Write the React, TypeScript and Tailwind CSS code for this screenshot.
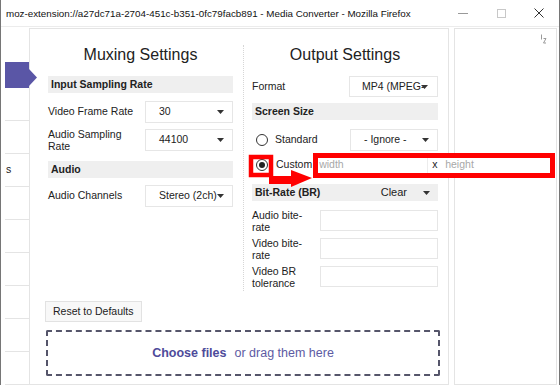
import React from 'react';

// small dropdown caret used by every select
const Caret = ({ className = '' }: { className?: string }) => (
  <svg width="7" height="4" viewBox="0 0 7 4" className={`shrink-0 ${className}`}>
    <polygon points="0,0 7,0 3.5,4" fill="#333" />
  </svg>
);

const Select = ({ value, className = '' }: { value: string; className?: string }) => (
  <div className={`flex items-center h-[22px] bg-white border border-[#e6e6e6] pl-[13px] pr-[8px] ${className}`}>
    <span className="flex-1 whitespace-nowrap">{value}</span>
    <Caret />
  </div>
);

const Section = ({ children, className = '' }: { children: React.ReactNode; className?: string }) => (
  <div className={`h-[17px] bg-[#efefef] pl-[3px] flex items-center font-bold ${className}`}>{children}</div>
);

const Radio = ({ checked }: { checked?: boolean }) => (
  <span className="w-[12px] h-[12px] rounded-full border border-[#333] bg-white flex items-center justify-center shrink-0">
    {checked && <span className="w-[6px] h-[6px] rounded-full bg-[#222]" />}
  </span>
);

const InputRow = ({ label, className = '' }: { label: string; className?: string }) => (
  <div className={`flex items-center h-[21px] ${className}`}>
    <span className="w-[64px] leading-[12px]">{label}</span>
    <div className="ml-auto w-[118px] h-[21px] bg-white border border-[#e6e6e6]" />
  </div>
);

const TitleBar = () => (
  <div className="flex items-center h-[27px] border-b border-[#ececec] bg-white">
    <span className="pl-[5px] pt-[2px] font-['Liberation_Sans',Arial,sans-serif] text-[9.8px] text-[#111] whitespace-nowrap">
      moz-extension://a27dc71a-2704-451c-b351-0fc79facb891 - Media Converter - Mozilla Firefox
    </span>
    <div className="ml-auto mr-[1px] flex h-full">
      <div className="w-[38px] flex items-center justify-center">
        <span className="w-[10px] h-px bg-[#999]" />
      </div>
      <div className="w-[38px] flex items-center justify-center">
        <span className="w-[9px] h-[9px] border border-[#c8c8c8]" />
      </div>
      <div className="w-[38px] flex items-center justify-center">
        <svg width="10" height="10" viewBox="0 0 10 10">
          <path d="M0.5 0.5 L9.5 9.5 M9.5 0.5 L0.5 9.5" stroke="#333" strokeWidth="1" />
        </svg>
      </div>
    </div>
  </div>
);

const Sidebar = () => (
  <div className="w-[28px] shrink-0 pl-[4px] pt-[34px] flex flex-col">
    <div className="relative h-[32px] bg-[#5a56a6]">
      <svg width="9" height="18" viewBox="0 0 9 18" className="absolute left-full top-[7px]">
        <polygon points="0,0 8,8.5 0,17" fill="#5a56a6" />
      </svg>
    </div>
    {['', '', 's', '', '', '', '', '', ''].map((t, i) => (
      <div key={i} className="h-[33px] border-b border-[#e4e4e4] flex items-center pl-[1px] shrink-0">
        {t}
      </div>
    ))}
  </div>
);

export default function App() {
  return (
    <div className="relative w-[560px] h-[385px] overflow-hidden bg-white border-x border-[#767676] font-['Liberation_Sans',Arial,sans-serif] text-[10.5px] text-[#222] flex flex-col">
      <TitleBar />
      <div className="flex flex-1 min-h-0 pt-[1px]">
        <Sidebar />

        {/* main converter panel */}
        <div className="w-[420px] shrink-0 border border-[#e4e4e4] bg-white pl-[15px] pr-[9px] pt-[16px]">
          <div className="flex ml-[3px]">
            <div className="w-[196px] pr-[10px] border-r border-dotted border-[#d6d6d6]">
              <h2 className="text-[16px] leading-[20px] text-center font-normal">Muxing Settings</h2>
              <Section className="mt-[11px]">Input Sampling Rate</Section>
              <div className="flex items-center mt-[8px]">
                <span className="w-[97px]">Video Frame Rate</span>
                <Select value="30" className="w-[88px]" />
              </div>
              <div className="flex items-center mt-[5px]">
                <span className="w-[97px] leading-[12px]">Audio Sampling Rate</span>
                <Select value="44100" className="w-[88px]" />
              </div>
              <Section className="mt-[9px]">Audio</Section>
              <div className="flex items-center mt-[7px]">
                <span className="w-[97px]">Audio Channels</span>
                <Select value="Stereo (2ch)" className="w-[88px]" />
              </div>
            </div>

            <div className="w-[194px] pl-[8px] pb-[4px]">
              <h2 className="text-[16px] leading-[20px] text-center font-normal">Output Settings</h2>
              <div className="flex items-center mt-[11px] h-[21px]">
                <span>Format</span>
                <div className="ml-auto w-[89px] h-[21px] flex items-center bg-white border border-[#e6e6e6] pl-[12px] pr-[7px]">
                  <span className="whitespace-nowrap">MP4 (MPEG-</span>
                  <Caret className="-ml-[3px]" />
                </div>
              </div>
              <Section className="mt-[6px]">Screen Size</Section>
              <div className="flex items-center mt-[9px]">
                <span className="ml-[4px]"><Radio /></span>
                <span className="ml-[7px]">Standard</span>
                <Select value="- Ignore -" className="ml-auto w-[88px]" />
              </div>
              <div className="flex items-center mt-[3px] h-[22px]">
                <span className="ml-[4px]"><Radio checked /></span>
                <span className="ml-[8px]">Custom</span>
                <div className="relative z-10 ml-[1px] shrink-0 w-[242px] h-[25px] border-[5px] border-[#f00] bg-white flex items-center">
                  <span className="w-[110px] h-full pl-[1px] flex items-center text-[#a8a8a8] border-r border-[#ececec]">width</span>
                  <span className="w-[14px] pl-[4px]">x</span>
                  <span className="pl-[3px] text-[#a8a8a8]">height</span>
                </div>
              </div>
              <Section className="mt-[8px] pr-[8px]">
                <span>Bit-Rate (BR)</span>
                <span className="ml-auto font-normal text-[11px] mr-[16px]">Clear</span>
                <Caret />
              </Section>
              <InputRow label="Audio bite-rate" className="mt-[9px]" />
              <InputRow label="Video bite-rate" className="mt-[7px]" />
              <InputRow label="Video BR tolerance" className="mt-[7px]" />
            </div>
          </div>

          <button className="mt-[10px] h-[21px] px-[7px] bg-[#f8f8f8] border border-[#e2e2e2] text-[10.5px] text-[#222]">
            Reset to Defaults
          </button>
          <div className="mt-[8px] ml-[1px] w-[394px] h-[46px] border-2 border-dashed border-[#55556a] rounded-[2px] flex items-center justify-center gap-[8px] text-[12.5px]">
            <span className="font-bold text-[#4e4b9a]">Choose files</span>
            <span className="text-[#5d5ba3]">or drag them here</span>
          </div>
        </div>

        {/* right side panel */}
        <div className="ml-[5px] mr-[2px] flex-1 border border-[#e4e4e4] bg-white flex justify-end pt-[5px] pr-[9px]">
          <svg width="7" height="10" viewBox="0 0 7 10">
            <path d="M1.5 0.5 V5.5 M3.5 4.5 H6 L3.5 9 H6" stroke="#9a9a9a" strokeWidth="1" fill="none" />
          </svg>
        </div>
      </div>

      {/* red annotation: square around the radio with arrow */}
      <svg className="absolute inset-0 pointer-events-none" width="560" height="385" viewBox="0 0 560 385">
        <rect x="250" y="157" width="20" height="18" fill="none" stroke="#f00" strokeWidth="4.5" />
        <rect x="268" y="176" width="23" height="8" fill="#f00" />
        <polygon points="290,170 311,178 290,187" fill="#f00" />
      </svg>
    </div>
  );
}
